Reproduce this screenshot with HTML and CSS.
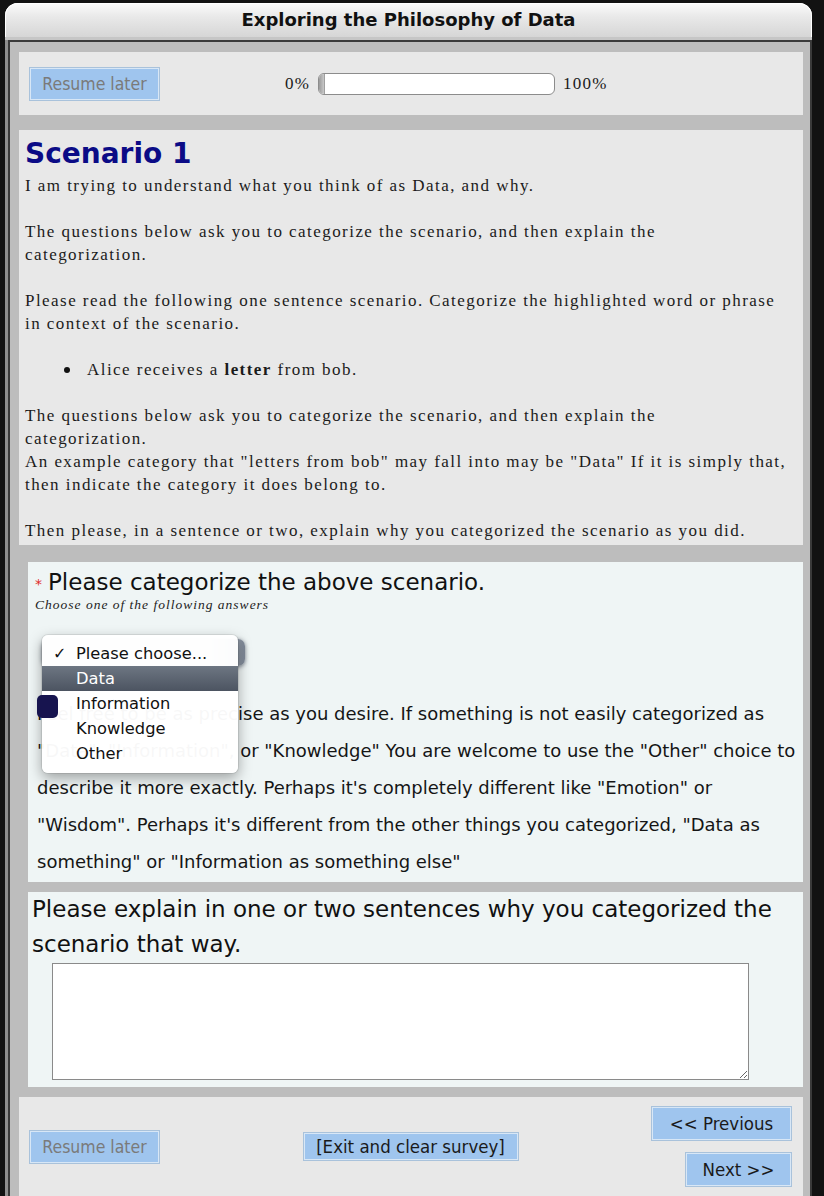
FILE: index.html
```html
<!DOCTYPE html>
<html lang="en">
<head>
<meta charset="utf-8">
<title>Exploring the Philosophy of Data</title>
<link rel="stylesheet" href="styles.css">
</head>
<body>
<div class="window">
  <div class="titlebar">Exploring the Philosophy of Data</div>
  <div class="frame">
    <div class="inner">
      <section class="panel progress-panel">
        <button class="btn btn-muted btn-resume">Resume later</button>
        <div class="progress">
          <span class="pct">0%</span>
          <div class="bar"><div class="fill"></div></div>
          <span class="pct">100%</span>
        </div>
      </section>

      <section class="panel desc">
        <h2 class="scenario-title">Scenario 1</h2>
        <p>I am trying to understand what you think of as Data, and why.</p>
        <p>The questions below ask you to categorize the scenario, and then explain the<br>categorization.</p>
        <p>Please read the following one sentence scenario. Categorize the highlighted word or phrase<br>in context of the scenario.</p>
        <ul class="bullets"><li>Alice receives a <b>letter</b> from bob.</li></ul>
        <p>The questions below ask you to categorize the scenario, and then explain the<br>categorization.<br>An example category that "letters from bob" may fall into may be "Data" If it is simply that,<br>then indicate the category it does belong to.</p>
        <p class="last">Then please, in a sentence or two, explain why you categorized the scenario as you did.</p>
      </section>

      <section class="panel question q-select">
        <div class="q-head"><span class="req">*</span><span class="q-text">Please categorize the above scenario.</span></div>
        <div class="q-help">Choose one of the following answers</div>
        <div class="select-box"></div>
        <p class="q-para">Feel free to be as precise as you desire. If something is not easily categorized as "Data", "Information", or "Knowledge" You are welcome to use the "Other" choice to describe it more exactly. Perhaps it's completely different like "Emotion" or "Wisdom". Perhaps it's different from the other things you categorized, "Data as something" or "Information as something else"</p>
        <div class="marker"></div>
        <ul class="menu">
          <li class="menu-item checked"><span class="check">✓</span>Please choose...</li>
          <li class="menu-item active">Data</li>
          <li class="menu-item">Information</li>
          <li class="menu-item">Knowledge</li>
          <li class="menu-item">Other</li>
        </ul>
      </section>

      <section class="panel question q-text-panel">
        <div class="q2-head">Please explain in one or two sentences why you categorized the scenario that way.</div>
        <textarea class="answer"></textarea>
      </section>

      <section class="panel nav">
        <div class="nav-left"><button class="btn btn-muted btn-resume">Resume later</button></div>
        <div class="nav-center"><button class="btn btn-exit">[Exit and clear survey]</button></div>
        <div class="nav-right">
          <button class="btn btn-prev">&lt;&lt; Previous</button>
          <button class="btn btn-next">Next &gt;&gt;</button>
        </div>
      </section>
    </div>
  </div>
</div>
</body>
</html>
```
FILE: styles.css
```css
* { box-sizing: border-box; }
html, body { margin: 0; padding: 0; }
body {
  background: #121212;
  width: 824px;
  height: 1196px;
  overflow: hidden;
}

.window {
  margin-left: 5px;
  width: 807px;
  padding-top: 3px;
}

.titlebar {
  height: 37px;
  border-radius: 13px 13px 0 0;
  background: linear-gradient(#fbfbfb, #e9e9e9 40%, #d6d6d6);
  border-bottom: 3px solid #c6c6c6;
  box-shadow: inset 0 1px 0 #ffffff, inset 1px 0 0 #ffffff, inset -1px 0 0 #ffffff;
  text-align: center;
  font: bold 18px/34px "DejaVu Sans", sans-serif;
  color: #111;
}

.frame {
  border-left: 3px solid #8e8e8e;
  background: #bdbdbd;
}

.inner {
  border: 2px solid #3a3a3a;
  border-bottom: 0;
  padding: 10px 7px 0 9px;
  display: flex;
  flex-direction: column;
}

.panel { background: #e8e8e8; }

/* ---------- buttons ---------- */
.btn {
  display: inline-flex;
  align-items: center;
  justify-content: center;
  padding: 0;
  background: #9fc5ee;
  border: 1px solid #a9c2db;
  box-shadow: inset 0 0 0 1px #d8e7f6;
  font: 18.5px "DejaVu Sans Condensed", "DejaVu Sans", sans-serif;
  color: #1a1a1a;
  border-radius: 0;
}
.btn-muted { color: #7a7a7a; font-size: 17.5px; }
.btn-resume { width: 131px; height: 34px; }
.btn-exit { width: 216px; height: 29px; }
.btn-prev { width: 141px; height: 35px; }
.btn-next { width: 107px; height: 35px; }

/* ---------- progress ---------- */
.progress-panel {
  height: 63px;
  display: flex;
  align-items: center;
  padding-left: 10px;
}
.progress {
  margin-left: 125px;
  display: flex;
  align-items: center;
  gap: 8px;
  font: 17px "Liberation Serif", serif;
  letter-spacing: 1.2px;
  color: #1a1a1a;
}
.bar {
  width: 237px;
  height: 22px;
  border: 1px solid #8c8c8c;
  border-radius: 6px;
  background: #fff;
  overflow: hidden;
  display: flex;
}
.fill {
  width: 6px;
  background: linear-gradient(90deg, #9a9a9a, #c8c8c8);
  border-right: 1px solid #a0a0a0;
}

/* ---------- description ---------- */
.desc {
  margin-top: 15px;
  height: 415px;
  padding: 4px 4px 0 6px;
  font: 17px/23px "Liberation Serif", serif;
  letter-spacing: 1.45px;
  color: #1b1b1b;
}
.scenario-title {
  margin: 0;
  font: bold 28px/40px "DejaVu Sans", sans-serif;
  letter-spacing: 0;
  color: #0b0b86;
}
.desc p { margin: 0 0 23px 0; }
.desc p.last { margin-bottom: 0; }
.bullets {
  margin: 0 0 23px 0;
  padding-left: 62px;
  list-style: none;
}
.bullets li { position: relative; }
.bullets li::before {
  content: "";
  position: absolute;
  left: -23px;
  top: 9px;
  width: 6px;
  height: 6px;
  border-radius: 50%;
  background: #111;
}

/* ---------- question panels ---------- */
.question {
  margin-left: 9px;
  background: #eff5f5;
}
.q-select {
  margin-top: 17px;
  height: 320px;
  position: relative;
  padding: 6px 3px 0 7px;
}
.q-head {
  display: flex;
  align-items: center;
  height: 28px;
}
.req {
  color: #e02a2a;
  font: 14px "DejaVu Sans", sans-serif;
  width: 13px;
  padding-top: 4px;
}
.q-text {
  font: 23px/28px "DejaVu Sans", sans-serif;
  color: #111;
}
.q-help {
  font: italic 13.5px/18px "Liberation Serif", serif;
  letter-spacing: 1px;
  color: #222;
}
.select-box {
  margin: 25px 0 0 7px;
  width: 203px;
  height: 27px;
  border-radius: 7px;
  background: linear-gradient(90deg, #d9dce0 80%, #7d8796);
  box-shadow: 0 1px 4px rgba(30,40,60,0.6);
}
.q-para {
  margin: 29px 0 0 2px;
  font: 18px/37px "DejaVu Sans", sans-serif;
  color: #151515;
}
.marker {
  position: absolute;
  left: 9px;
  top: 133px;
  width: 21px;
  height: 23px;
  border-radius: 5px;
  background: #17144f;
  z-index: 3;
}
.menu {
  position: absolute;
  left: 14px;
  top: 73px;
  width: 196px;
  height: 138px;
  margin: 0;
  padding: 6px 0 0 0;
  list-style: none;
  background: rgba(255,255,255,0.97);
  border-radius: 6px;
  box-shadow: 0 0 0 1px rgba(0,0,0,0.08), 0 5px 14px rgba(0,0,0,0.35);
  z-index: 2;
}
.menu-item {
  position: relative;
  height: 25px;
  padding-left: 34px;
  font: 16.3px/25px "DejaVu Sans", sans-serif;
  color: #111;
}
.menu-item.active {
  background: linear-gradient(#6d7682, #4c5461);
  color: #fff;
}
.check {
  position: absolute;
  left: 11px;
  top: 0;
  font-size: 16px;
  font-weight: bold;
}

.q-text-panel {
  margin-top: 10px;
  height: 195px;
  padding: 0 0 0 4px;
}
.q2-head {
  font: 23px/35px "DejaVu Sans", sans-serif;
  color: #111;
}
.answer {
  display: block;
  margin: 1px 0 0 20px;
  width: 697px;
  height: 117px;
  border: 1px solid #8a8a8a;
  background: #fff;
  resize: both;
}

/* ---------- nav ---------- */
.nav {
  margin-top: 10px;
  height: 110px;
  padding: 9px 11px 0 10px;
  display: grid;
  grid-template-columns: 1fr auto 1fr;
  align-items: start;
}
.nav-left, .nav-center {
  height: 81px;
  display: flex;
  align-items: center;
}
.nav-center { justify-content: center; }
.nav-right {
  display: flex;
  flex-direction: column;
  align-items: flex-end;
  gap: 11px;
}
```
